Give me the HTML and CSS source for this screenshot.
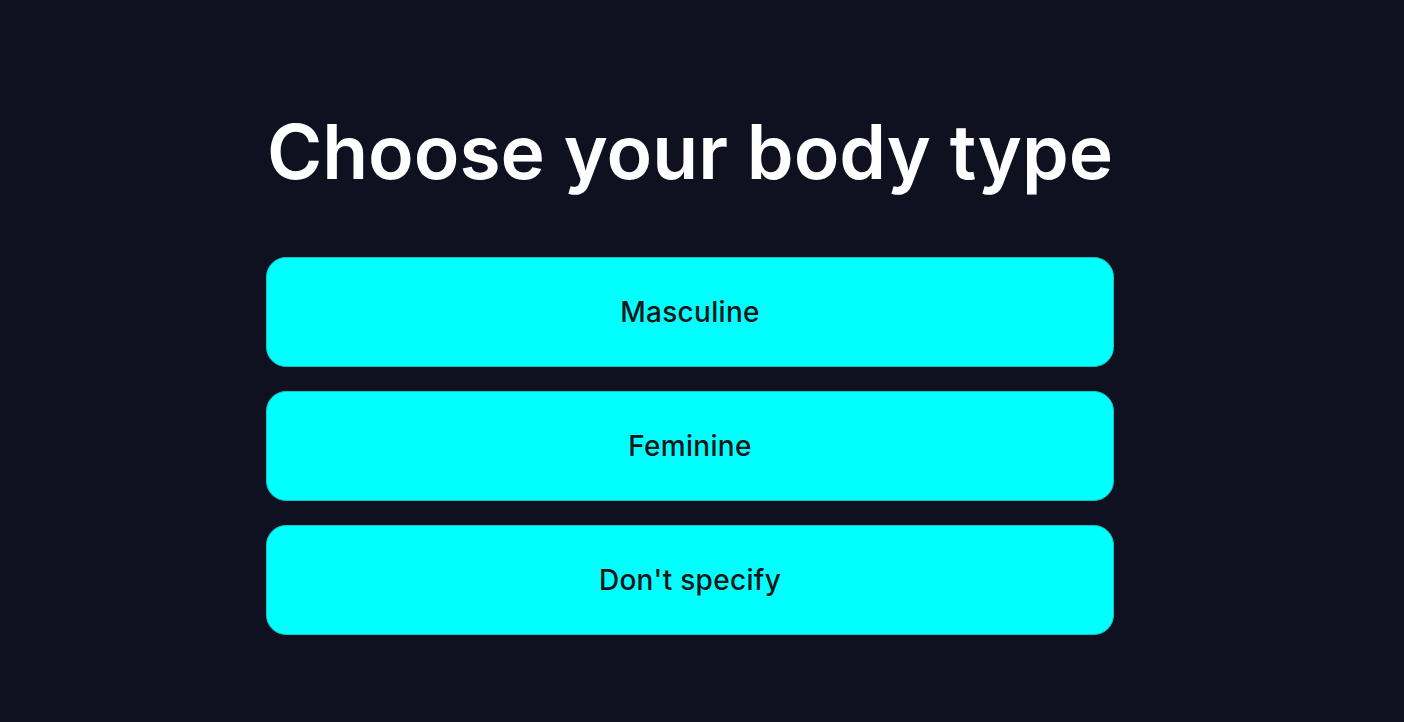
FILE: index.html
```html
<!DOCTYPE html>
<html lang="en">
<head>
  <meta charset="UTF-8">
  <meta name="viewport" content="width=device-width, initial-scale=1.0">
  <title>Body type</title>
  <link rel="stylesheet" href="styles.css">
</head>
<body>
  <main class="quiz">
    <h1>Choose your body type</h1>
    <div class="options">
      <button class="option">Masculine</button>
      <button class="option">Feminine</button>
      <button class="option">Don't specify</button>
    </div>
  </main>
</body>
</html>
```

FILE: styles.css
```css
body {
  margin: 0;
  padding: 0 24px 0 0;
  background-color: #0f1020;
  font-family: Inter, "Noto Sans", sans-serif;
  min-height: 722px;
}

.quiz {
  width: 848px;
  margin: 0 auto;
  padding-top: 109px;
}

.quiz h1 {
  margin: 0 0 62px;
  color: #fff;
  font-size: 75px;
  font-weight: 600;
  line-height: 86px;
  text-align: center;
  letter-spacing: 0;
  white-space: nowrap;
}

.options {
  display: flex;
  flex-direction: column;
  gap: 24px;
}

.option {
  height: 110px;
  background-color: #00ffff;
  border: 1px solid #10c4bc;
  border-radius: 20px;
  color: #151515;
  font-family: Inter, "Noto Sans", sans-serif;
  font-size: 28px;
  font-weight: 500;
  letter-spacing: 0.3px;
  cursor: pointer;
}
```
